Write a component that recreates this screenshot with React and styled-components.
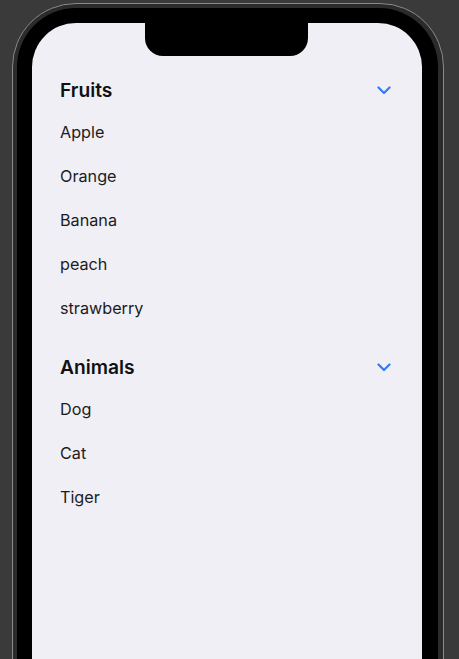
import React from 'react';
import styled, { createGlobalStyle } from 'styled-components';

const GlobalStyle = createGlobalStyle`
  html, body {
    margin: 0;
    padding: 0;
    background: #3a3a3a;
    overflow: hidden;
    font-family: Inter, "Liberation Sans", sans-serif;
  }
`;

const sections = [
  { title: 'Fruits', items: ['Apple', 'Orange', 'Banana', 'peach', 'strawberry'] },
  { title: 'Animals', items: ['Dog', 'Cat', 'Tiger'] },
];

const Frame = styled.div`
  margin: 3px 0 0 12px;
  width: 432px;
  height: 760px;
  box-sizing: border-box;
  border: 1px solid #8a8a8a;
  border-radius: 64px;
  padding: 4px 5px 0 4px;
  background: #2b2b2b;
`;

const Bezel = styled.div`
  height: 100%;
  box-sizing: border-box;
  background: #000;
  border-radius: 59px;
  padding: 15px 16px 0 15px;
`;

const Screen = styled.div`
  position: relative;
  height: 100%;
  background: #f0eff5;
  border-radius: 44px;
  padding: 47px 31px 0 28px;
  box-sizing: border-box;
`;

const Notch = styled.div`
  position: absolute;
  top: 0;
  left: 113px;
  width: 163px;
  height: 33px;
  background: #000;
  border-radius: 0 0 18px 18px;
`;

const Section = styled.section`
  display: flex;
  flex-direction: column;
  & + & {
    margin-top: 17px;
  }
`;

const Header = styled.div`
  height: 40px;
  display: flex;
  align-items: center;
  justify-content: space-between;
  font-size: 19.2px;
  font-weight: 600;
  color: #111113;
`;

const Item = styled.div`
  height: 44px;
  display: flex;
  align-items: center;
  font-size: 16.2px;
  color: #1c1c1e;
`;

const Chevron = () => (
  <svg width="14" height="9" viewBox="0 0 14 9">
    <polyline
      points="1.5,1.5 7,7 12.5,1.5"
      fill="none"
      stroke="#2f7cf6"
      strokeWidth="2.2"
      strokeLinecap="round"
      strokeLinejoin="round"
    />
  </svg>
);

export default function App() {
  return (
    <>
      <GlobalStyle />
      <Frame>
        <Bezel>
          <Screen>
            <Notch />
            {sections.map((s) => (
              <Section key={s.title}>
                <Header>
                  {s.title}
                  <Chevron />
                </Header>
                {s.items.map((it) => (
                  <Item key={it}>{it}</Item>
                ))}
              </Section>
            ))}
          </Screen>
        </Bezel>
      </Frame>
    </>
  );
}
